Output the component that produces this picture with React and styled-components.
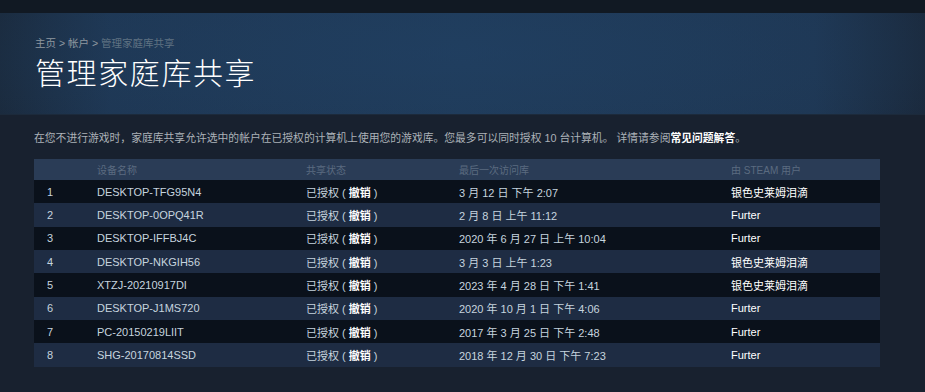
import styled, { createGlobalStyle } from "styled-components";

const GlobalStyle = createGlobalStyle`
  html, body {
    margin: 0;
    padding: 0;
    background: #18212f;
  }
  body {
    font-family: Arial, "Liberation Sans", "Noto Sans CJK SC", sans-serif;
  }
`;

const devices = [
  { name: "DESKTOP-TFG95N4", last: "3 月 12 日 下午 2:07", user: "银色史莱姆泪滴" },
  { name: "DESKTOP-0OPQ41R", last: "2 月 8 日 上午 11:12", user: "Furter" },
  { name: "DESKTOP-IFFBJ4C", last: "2020 年 6 月 27 日 上午 10:04", user: "Furter" },
  { name: "DESKTOP-NKGIH56", last: "3 月 3 日 上午 1:23", user: "银色史莱姆泪滴" },
  { name: "XTZJ-20210917DI", last: "2023 年 4 月 28 日 下午 1:41", user: "银色史莱姆泪滴" },
  { name: "DESKTOP-J1MS720", last: "2020 年 10 月 1 日 下午 4:06", user: "Furter" },
  { name: "PC-20150219LIIT", last: "2017 年 3 月 25 日 下午 2:48", user: "Furter" },
  { name: "SHG-20170814SSD", last: "2018 年 12 月 30 日 下午 7:23", user: "Furter" },
];

const Page = styled.div`
  width: 925px;
  min-height: 392px;
  background: #18212f;
`;

const TopBar = styled.div`
  height: 13px;
  background: #111923;
`;

const Banner = styled.div`
  height: 102px;
  box-sizing: border-box;
  padding: 23px 35px 0;
  background:
    radial-gradient(ellipse 70% 120% at 50% 40%, rgba(33, 66, 102, 0.55), rgba(27, 42, 61, 0) 100%),
    linear-gradient(90deg, #1a293b 0%, #1e3652 12%, #1f3a58 50%, #1e3652 88%, #1a283a 100%);
  border-bottom: 1px solid #1c2a3b;
`;

const Breadcrumb = styled.div`
  font-size: 10.5px;
  line-height: 14px;
  color: #8f98a0;

  span {
    color: #5f7282;
  }
`;

const Title = styled.h1`
  margin: 3px 0 0;
  font-family: "Noto Sans CJK SC", sans-serif;
  font-weight: 300;
  font-size: 30px;
  line-height: 36px;
  letter-spacing: 1.6px;
  color: #ffffff;
`;

const Content = styled.div`
  padding: 15px 45px 0 34px;
`;

const Description = styled.p`
  margin: 0 0 13px;
  font-size: 10.8px;
  line-height: 16px;
  color: #acb2b8;

  b {
    color: #ffffff;
  }
`;

const Table = styled.div`
  width: 846px;
`;

const Row = styled.div`
  display: grid;
  grid-template-columns: 63px 209px 153px 272px 1fr;
  align-items: center;
  height: ${(p) => (p.$head ? "21px" : "23.33px")};
  background: ${(p) => (p.$head ? "#2a3c56" : p.$odd ? "#0a111b" : "#1e2c43")};
  font-size: ${(p) => (p.$head ? "10px" : "11px")};
  color: ${(p) => (p.$head ? "#5b6b80" : "#c6d4df")};
`;

const Cell = styled.div`
  white-space: nowrap;
  padding-left: ${(p) => (p.$first ? "13px" : "0")};
  color: ${(p) => (p.$bright ? "#ffffff" : "inherit")};
`;

const Revoke = styled.b`
  color: #ffffff;
`;

export default function App() {
  return (
    <Page>
      <GlobalStyle />
      <TopBar />
      <Banner>
        <Breadcrumb>
          主页 &gt; 帐户 &gt; <span>管理家庭库共享</span>
        </Breadcrumb>
        <Title>管理家庭库共享</Title>
      </Banner>
      <Content>
        <Description>
          在您不进行游戏时，家庭库共享允许选中的帐户在已授权的计算机上使用您的游戏库。您最多可以同时授权 10 台计算机。 详情请参阅<b>常见问题解答</b>。
        </Description>
        <Table>
          <Row $head>
            <Cell $first />
            <Cell>设备名称</Cell>
            <Cell>共享状态</Cell>
            <Cell>最后一次访问库</Cell>
            <Cell>由 STEAM 用户</Cell>
          </Row>
          {devices.map((d, i) => (
            <Row key={d.name} $odd={i % 2 === 0}>
              <Cell $first>{i + 1}</Cell>
              <Cell>{d.name}</Cell>
              <Cell>
                已授权 ( <Revoke>撤销</Revoke> )
              </Cell>
              <Cell>{d.last}</Cell>
              <Cell $bright>{d.user}</Cell>
            </Row>
          ))}
        </Table>
      </Content>
    </Page>
  );
}
